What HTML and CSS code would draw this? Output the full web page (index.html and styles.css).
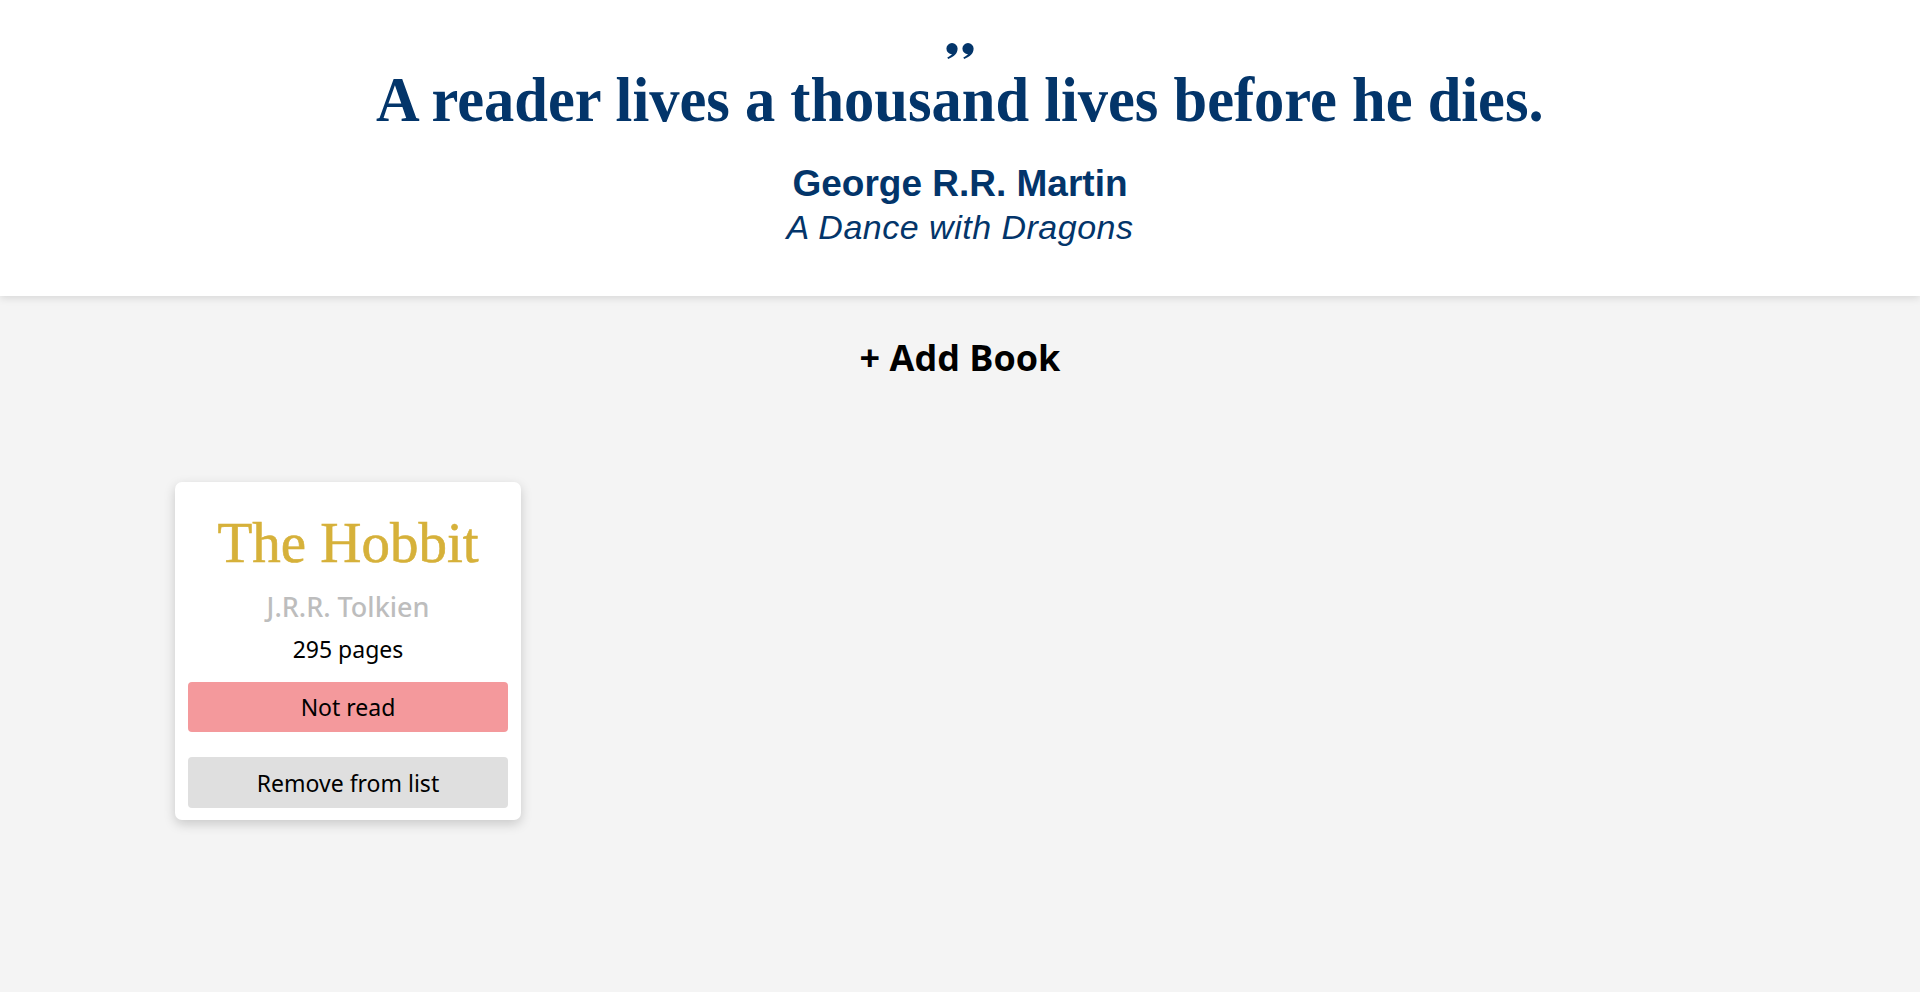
FILE: index.html
```html
<!DOCTYPE html>
<html lang="en">
<head>
<meta charset="utf-8">
<title>Library</title>
<link rel="stylesheet" href="styles.css">
</head>
<body>
<header class="hero">
  <svg class="quote-mark" width="28" height="16" viewBox="0 0 28 16" aria-hidden="true">
    <path d="M6 0 A5.6 5.6 0 0 1 11.6 5.6 C11.6 10.5 8 14 2.2 16 L1.3 14.6 C4 13 5.6 11.5 6 11.2 A5.6 5.6 0 0 1 6 0 Z"/>
    <path transform="translate(16 0)" d="M6 0 A5.6 5.6 0 0 1 11.6 5.6 C11.6 10.5 8 14 2.2 16 L1.3 14.6 C4 13 5.6 11.5 6 11.2 A5.6 5.6 0 0 1 6 0 Z"/>
  </svg>
  <h1 class="quote">A reader lives a thousand lives before he dies.</h1>
  <div class="source">
    <div class="author">George R.R. Martin</div>
    <div class="book">A Dance with Dragons</div>
  </div>
</header>
<main class="content">
  <button class="add-btn">+ Add Book</button>
  <section class="grid">
    <article class="card">
      <h2 class="card-title">The Hobbit</h2>
      <div class="card-author">J.R.R. Tolkien</div>
      <div class="card-pages">295 pages</div>
      <button class="btn btn-status">Not read</button>
      <button class="btn btn-remove">Remove from list</button>
    </article>
  </section>
</main>
</body>
</html>
```
FILE: styles.css
```css
* { box-sizing: border-box; }
html, body { margin: 0; padding: 0; }
body {
  background: #f4f4f4;
  min-height: 992px;
  font-family: "Noto Sans", "Open Sans", sans-serif;
}
.hero {
  background: #fff;
  height: 296px;
  box-shadow: 0 2px 8px rgba(0,0,0,0.12);
  display: flex;
  flex-direction: column;
  align-items: center;
  color: #03356a;
  position: relative;
}
.quote-mark {
  display: block;
  margin-top: 43px;
  fill: #03356a;
}
.quote {
  margin: 6px 0 0;
  font-family: "Liberation Serif", serif;
  font-weight: 700;
  font-size: 64px;
  line-height: 70px;
  letter-spacing: 0;
  transform: scaleX(0.945);
  white-space: nowrap;
}
.source {
  margin-top: 29px;
  text-align: center;
  font-family: "Liberation Sans", Arial, sans-serif;
}
.author {
  font-weight: 700;
  font-size: 37px;
  line-height: 40px;
}
.book {
  margin-top: 3px;
  font-style: italic;
  font-size: 34px;
  line-height: 40px;
  letter-spacing: 0.5px;
}
.content {
  display: flex;
  flex-direction: column;
  align-items: center;
}
.add-btn {
  margin-top: 37px;
  background: none;
  border: none;
  font-family: "Open Sans", sans-serif;
  font-weight: 700;
  font-size: 36px;
  line-height: normal;
  color: #000;
  padding: 0;
  cursor: pointer;
}
.grid {
  align-self: stretch;
  padding: 100px 175px 0;
  display: grid;
  grid-template-columns: repeat(auto-fill, 346px);
  gap: 30px;
}
.card {
  width: 346px;
  background: #fff;
  border-radius: 7px;
  box-shadow: 0 4px 12px rgba(0,0,0,0.18);
  padding: 29px 13px 12px;
  display: flex;
  flex-direction: column;
  align-items: stretch;
  text-align: center;
}
.card-title {
  margin: 0;
  font-family: "Liberation Serif", serif;
  font-weight: 400;
  font-size: 57px;
  line-height: 64px;
  color: #d6b13a;
  -webkit-text-stroke: 0.6px #d6b13a;
}
.card-author {
  margin-top: 14px;
  font-size: 27px;
  line-height: 36px;
  color: #bdbdbd;
  font-weight: 500;
}
.card-pages {
  margin-top: 9px;
  font-size: 23px;
  line-height: 30px;
  color: #000;
}
.btn {
  border: none;
  border-radius: 4px;
  height: 50px;
  font-family: "Noto Sans", sans-serif;
  font-size: 23px;
  color: #000;
  cursor: pointer;
  padding: 0;
}
.btn-status {
  margin-top: 18px;
  background: #f4999c;
}
.btn-remove {
  margin-top: 25px;
  height: 51px;
  background: #dfdfdf;
}
```
